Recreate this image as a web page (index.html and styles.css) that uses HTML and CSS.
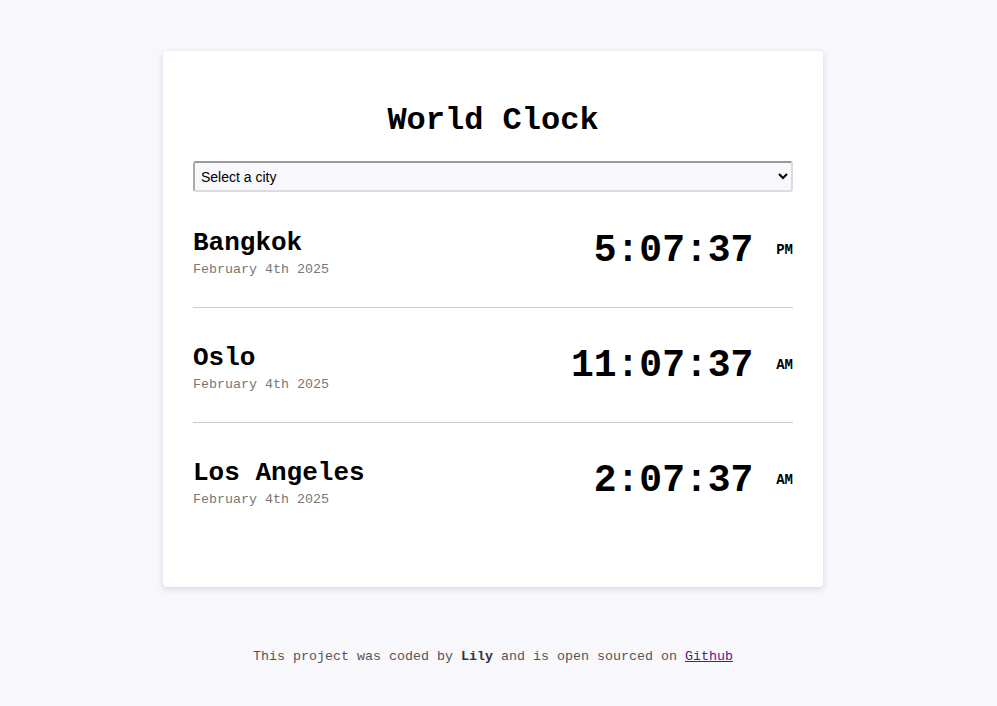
FILE: index.html
```html
<!DOCTYPE html>
<html lang="en">
<head>
<meta charset="utf-8">
<title>World Clock</title>
<link rel="stylesheet" href="styles.css">
</head>
<body>
<div class="page">
  <main class="card">
    <h1 class="title">World Clock</h1>
    <select class="city-select">
      <option>Select a city</option>
    </select>
    <div class="cities">
      <div class="city">
        <div class="city-info">
          <h2 class="city-name">Bangkok</h2>
          <div class="city-date">February 4th 2025</div>
        </div>
        <div class="city-time">5:07:37 <small class="ampm">PM</small></div>
      </div>
      <div class="city">
        <div class="city-info">
          <h2 class="city-name">Oslo</h2>
          <div class="city-date">February 4th 2025</div>
        </div>
        <div class="city-time">11:07:37 <small class="ampm">AM</small></div>
      </div>
      <div class="city last">
        <div class="city-info">
          <h2 class="city-name">Los Angeles</h2>
          <div class="city-date">February 4th 2025</div>
        </div>
        <div class="city-time">2:07:37 <small class="ampm">AM</small></div>
      </div>
    </div>
  </main>
  <footer class="footer">
    This project was coded by <strong>Lily</strong> and is open sourced on <a class="gh" href="#">Github</a>
  </footer>
</div>
</body>
</html>
```
FILE: styles.css
```css
html, body {
  margin: 0;
  padding: 0;
}
body {
  background: #f7f7fc;
  font-family: "Courier New", "Liberation Mono", monospace;
  color: #000;
  padding-right: 11px;
}
.page {
  width: 660px;
  margin: 51px auto 0;
}
.card {
  background: #fff;
  border-radius: 4px;
  box-shadow: 0 2px 6px rgba(60, 60, 90, 0.18);
  padding: 52px 30px 50px;
}
.title {
  margin: 0;
  font-size: 32px;
  line-height: 36px;
  font-weight: bold;
  text-align: center;
}
.city-select {
  display: block;
  box-sizing: border-box;
  width: 100%;
  height: 31px;
  margin: 22px 0 1px;
  padding: 0 2px;
  font-family: "Liberation Sans", Arial, sans-serif;
  font-size: 14px;
  color: #000;
  background: #f7f7fc;
  border: 2px solid #dcdce0;
  border-top-color: #999;
  border-left-color: #aaa;
  border-radius: 3px;
}
.city {
  display: flex;
  justify-content: space-between;
  align-items: flex-start;
  padding: 36px 0 30px;
  border-bottom: 1px solid #ccc;
}
.city.last {
  border-bottom: none;
}
.city-name {
  margin: 0;
  font-size: 26px;
  line-height: 29px;
  font-weight: bold;
}
.city-date {
  margin-top: 4px;
  font-size: 13.33px;
  line-height: 15px;
  color: #777;
}
.city-time {
  margin-top: 0;
  font-size: 38px;
  line-height: 43px;
  font-weight: bold;
  white-space: nowrap;
}
.ampm {
  font-size: 14px;
  font-weight: bold;
  vertical-align: 7px;
}
.footer {
  margin-top: 62px;
  text-align: center;
  font-size: 13.33px;
  line-height: 15px;
  color: #555;
}
.footer strong {
  color: #333;
}
.gh {
  color: #551a8b;
}
```
